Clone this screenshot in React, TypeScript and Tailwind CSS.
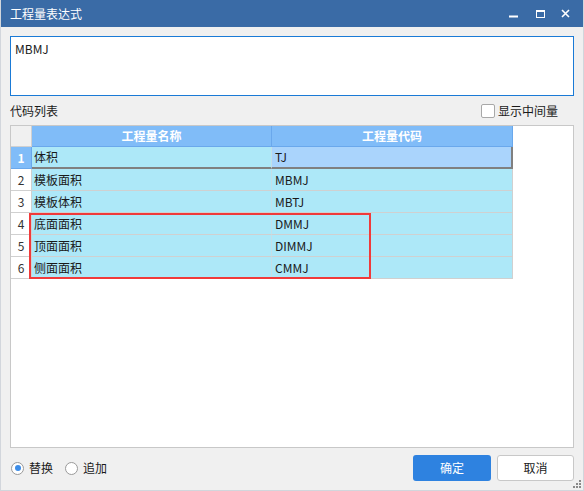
import React from 'react';

const rows = [
  { id: 1, name: '体积', code: 'TJ' },
  { id: 2, name: '模板面积', code: 'MBMJ' },
  { id: 3, name: '模板体积', code: 'MBTJ' },
  { id: 4, name: '底面面积', code: 'DMMJ' },
  { id: 5, name: '顶面面积', code: 'DIMMJ' },
  { id: 6, name: '侧面面积', code: 'CMMJ' },
];

const TitleBar: React.FC = () => (
  <div className="flex items-center h-[27px] bg-[#3a6ba6] text-white pl-[9px] pr-[10px] shrink-0">
    <span className="flex-1 text-[12px]">工程量表达式</span>
    <div className="flex items-center">
      <svg width="28" height="27" viewBox="0 0 28 27">
        <rect x="10" y="15.5" width="9" height="2" fill="#fff" />
      </svg>
      <svg width="28" height="27" viewBox="0 0 28 27">
        <rect x="9.5" y="10.5" width="8" height="7" fill="none" stroke="#fff" strokeWidth="1" />
        <rect x="9" y="10" width="9" height="2" fill="#fff" />
      </svg>
      <svg width="18" height="27" viewBox="0 0 18 27">
        <path d="M7 10 L14 17 M14 10 L7 17" stroke="#fff" strokeWidth="1.6" />
      </svg>
    </div>
  </div>
);

const Radio: React.FC<{ checked?: boolean; label: string }> = ({ checked, label }) => (
  <label className="flex items-center gap-[5px]">
    <span className="flex items-center justify-center w-[13px] h-[13px] rounded-full border border-[#9a9a9a] bg-white">
      {checked && <span className="w-[6px] h-[6px] rounded-full bg-[#3d8de8]" />}
    </span>
    <span>{label}</span>
  </label>
);

export default function App() {
  return (
    <div
      className="relative flex flex-col w-[584px] h-[491px] bg-[#f0f0f0] border-x border-b border-[#d2d6dc] text-[12px] text-[#1a1a1a]"
      style={{ fontFamily: '"Noto Sans CJK SC", "Noto Sans", sans-serif' }}
    >
      <TitleBar />
      <div className="flex flex-col flex-1 px-[9px]">
        <div className="mt-[9px] h-[60px] bg-white border border-[#1a7ad6] px-[4px] pt-[3px] leading-[18px]">
          MBMJ
        </div>

        <div className="flex items-center justify-between mt-[4px] h-[22px]">
          <span>代码列表</span>
          <label className="flex items-center gap-[3px] mr-[16px]">
            <span className="w-[14px] h-[14px] rounded-[2px] border border-[#a8a8a8] bg-white" />
            <span>显示中间量</span>
          </label>
        </div>

        <div className="relative mt-[3px] h-[323px] bg-white border border-[#c8c8c8]">
          <div className="grid grid-cols-[21px_240px_241px] leading-[20px]">
            <div className="h-[21px] bg-[#f0f0f0] border-r border-b border-[#d0d0d0]" />
            <div className="h-[21px] bg-[#80bcf8] border-r border-b border-[#6aa8ec] text-white font-bold text-center">
              工程量名称
            </div>
            <div className="h-[21px] bg-[#80bcf8] border-r border-b border-[#6aa8ec] text-white font-bold text-center">
              工程量代码
            </div>
            {rows.map((r) => {
              const first = r.id === 1;
              return (
                <React.Fragment key={r.id}>
                  <div
                    className={`h-[22px] flex items-center justify-center border-r border-b ${
                      first
                        ? 'bg-[#80bcf8] border-[#6aa8ec] text-white font-bold'
                        : 'bg-white border-[#d0d0d0] text-[#333]'
                    }`}
                  >
                    {r.id}
                  </div>
                  <div
                    className={`h-[22px] flex items-center pl-[2px] bg-[#ade8f8] border-r border-r-[#c4dfe8] ${
                      first ? 'border-b-2 border-b-[#808080]' : 'border-b border-b-[#d0d0d0]'
                    }`}
                  >
                    {r.name}
                  </div>
                  <div
                    className={`h-[22px] flex items-center pl-[3px] ${
                      first
                        ? 'bg-[#aad4fc] border-b-2 border-r-2 border-[#808080]'
                        : 'bg-[#ade8f8] border-b border-r border-[#d0d0d0]'
                    }`}
                  >
                    {r.code}
                  </div>
                </React.Fragment>
              );
            })}
          </div>
          <div className="absolute left-[18px] top-[87px] w-[342px] h-[66px] border-2 border-[#f03a3a] pointer-events-none" />
        </div>

        <div className="flex items-center justify-between mt-[7px] h-[26px]">
          <div className="flex items-center gap-[12px] ml-[1px]">
            <Radio checked label="替换" />
            <Radio label="追加" />
          </div>
          <div className="flex items-center gap-[6px]">
            <button className="w-[78px] h-[26px] rounded-[3px] bg-[#2e82e0] text-white">确定</button>
            <button className="w-[77px] h-[26px] rounded-[3px] bg-white border border-[#c8c8c8]">取消</button>
          </div>
        </div>
      </div>
      <svg className="absolute right-[2px] bottom-[2px]" width="8" height="8" viewBox="0 0 8 8">
        <rect x="6" y="0" width="2" height="2" fill="#8a8a8a" />
        <rect x="3" y="3" width="2" height="2" fill="#8a8a8a" />
        <rect x="6" y="3" width="2" height="2" fill="#8a8a8a" />
        <rect x="0" y="6" width="2" height="2" fill="#8a8a8a" />
        <rect x="3" y="6" width="2" height="2" fill="#8a8a8a" />
        <rect x="6" y="6" width="2" height="2" fill="#8a8a8a" />
      </svg>
    </div>
  );
}
